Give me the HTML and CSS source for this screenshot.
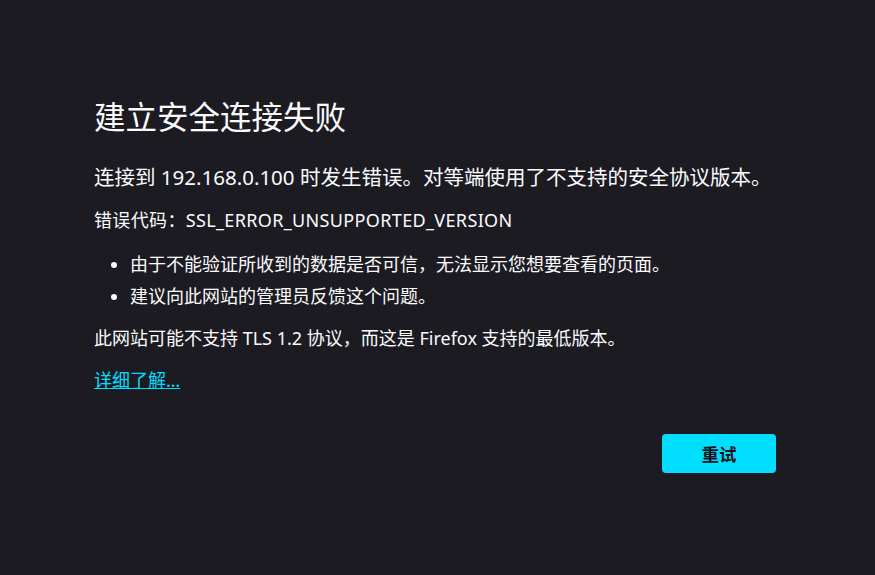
FILE: index.html
```html
<!DOCTYPE html>
<html lang="zh-CN">
<head>
    <meta charset="UTF-8">
    <meta name="viewport" content="width=device-width, initial-scale=1.0">
    <title>建立安全连接失败</title>
    <link rel="stylesheet" href="styles.css">
</head>
<body>
    <div class="errorPage">
        <h1 class="title">建立安全连接失败</h1>
        <p class="intro">连接到 192.168.0.100 时发生错误。对等端使用了不支持的安全协议版本。</p>
        <p class="code">错误代码：SSL_ERROR_UNSUPPORTED_VERSION</p>
        <ul class="reasons">
            <li>由于不能验证所收到的数据是否可信，无法显示您想要查看的页面。</li>
            <li>建议向此网站的管理员反馈这个问题。</li>
        </ul>
        <p class="note">此网站可能不支持 TLS 1.2 协议，而这是 Firefox 支持的最低版本。</p>
        <a class="learnMore" href="#">详细了解…</a>
        <div class="btnRow"><button class="retryBtn">重试</button></div>
    </div>
</body>
</html>
```

FILE: styles.css
```css
*{margin: 0; padding: 0; box-sizing: border-box;}
html, body{background-color: #1c1b22; color: #fbfbfe; font-family: "Noto Sans", "Noto Sans CJK SC", sans-serif;}
.errorPage{width: 682px; margin-left: 94px; padding-top: 99px; display: flex; flex-direction: column;}
.title{font-size: 31.5px; line-height: 36px; font-weight: 400;}
.intro{font-size: 20.5px; line-height: 30px; margin-top: 27px;}
.code{font-size: 18px; line-height: 27px; margin-top: 15px; letter-spacing: 0.35px;}
.reasons{font-size: 18px; line-height: 27px; margin-top: 17px; padding-left: 36px; display: flex; flex-direction: column; gap: 5px;}
.note{font-size: 18px; line-height: 27px; margin-top: 15px;}
.learnMore{font-size: 18px; line-height: 27px; margin-top: 15px; color: #00ddff; align-self: flex-start;}
.btnRow{display: flex; justify-content: flex-end; margin-top: 40px;}
.retryBtn{width: 114px; height: 39px; border: none; border-radius: 4px; background-color: #00ddff; color: #15141a; font-family: "Noto Sans CJK SC", sans-serif; font-size: 17.5px; font-weight: 700; cursor: pointer;}
```
